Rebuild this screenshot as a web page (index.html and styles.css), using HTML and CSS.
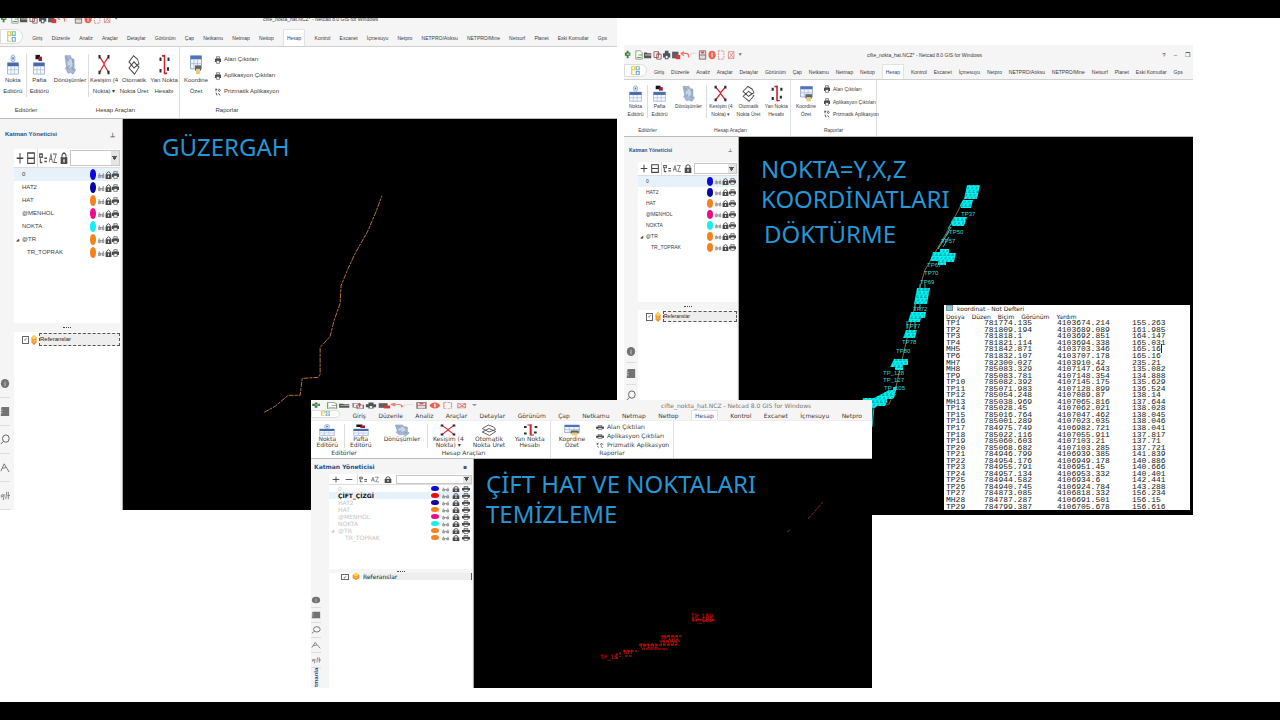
FILE: index.html
```html
<!DOCTYPE html>
<html lang="tr">
<head>
<meta charset="utf-8">
<title>Netcad güzergah</title>
<link rel="stylesheet" href="styles.css">
</head>
<body>
<svg class="defs" aria-hidden="true">
  <symbol id="quick" viewBox="0 0 130 12" preserveAspectRatio="none">
    <path d="M4 1v9M2 3v4M6 3v4" stroke="#267f63" stroke-width="2"/><path d="M3 5h3" stroke="#e8bd26" stroke-width="2"/>
    <path d="M13 1h5l2 2v8h-7z" fill="#fff" stroke="#7c9b7c"/><path d="M16 6h4M14 9h5" stroke="#4d9455" stroke-width="1"/>
    <path d="M22 3h3l1 1h4v6h-8z" fill="#555"/><path d="M23 6h8" stroke="#ddd"/>
    <path d="M33 2h5v7h-5zM36 5h5v6h-5z" fill="#eee" stroke="#8a6166"/><path d="M38 3v3" stroke="#d04444" stroke-width="2"/>
    <path d="M43 4h8v5h-8zM45 1h4v10h-4z" fill="#4b5556"/><path d="M46 7h2v3h-2z" fill="#fff"/>
    <path d="M53 2h7v8h-7z" fill="#645b60"/><path d="M57 6h5v5h-5z" fill="#d43b3b"/>
    <path d="M64 4h5q3 1 2 5M66 2l-3 2 3 3" fill="none" stroke="#e37b68" stroke-width="1.5"/>
    <path d="M80 4h-5q-3 1-2 5" fill="none" stroke="#ddd" stroke-width="1.5"/>
    <path d="M83 1h7v10h-7zM83 6h7" fill="#ddd" stroke="#915d60"/><path d="M85 3h3" stroke="#d43c3c" stroke-width="2"/>
    <ellipse cx="97" cy="6" rx="4" ry="5" fill="#e8664f"/><path d="M97 3v6" stroke="#fff"/>
    <path d="M104 1v10M110 1v10M104 1h6M104 11h6" stroke="#d8827d" stroke-dasharray="2 1"/>
    <path d="M115 2h6v8h-6zM116 3l5 7M121 2l-6 9" fill="none" stroke="#df8a85"/>
    <path d="M126 4h4l-2 3z" fill="#777"/>
  </symbol>
  <symbol id="logo" viewBox="0 0 12 16" preserveAspectRatio="none">
    <path d="M1 1h4v5H1zM1 6v8h4" fill="none" stroke="#dfc84a" stroke-width="1.5"/>
    <path d="M7 1h4v5H7z" fill="none" stroke="#73bfa3" stroke-width="1.5"/><path d="M7 9h4v5H7z" fill="none" stroke="#6ca6d9" stroke-width="1.5"/>
  </symbol>
  <symbol id="point" viewBox="0 0 24 24" preserveAspectRatio="none">
    <path d="M1 10h22v13H1z" fill="#f6f9ff" stroke="#8ba0cb"/><path d="M1 10h22v4H1z" fill="#466aac"/><path d="M1 18h22M8 14v9M15 14v9" stroke="#abb9dc"/>
    <circle cx="12" cy="5" r="4" fill="#dfeaf7" stroke="#7b9ac5"/><circle cx="12" cy="5" r="1.5" fill="#4a79b5"/>
  </symbol>
  <symbol id="sheet" viewBox="0 0 24 24" preserveAspectRatio="none">
    <path d="M1 10h22v13H1z" fill="#f6f9ff" stroke="#8ba0cb"/><path d="M1 10h22v4H1z" fill="#466aac"/><path d="M1 18h22M8 14v9M15 14v9" stroke="#abb9dc"/>
    <path d="M5 1h9v5H5z" fill="#161616"/><path d="M11 3h7v5h-7z" fill="#a3182b"/>
  </symbol>
  <symbol id="convert" viewBox="0 0 24 24" preserveAspectRatio="none">
    <path d="M2 2h11l2 4h5v10l3 2-5 5-5-2-5 1-3-4-2-1 2-3z" fill="#a9b9d2" stroke="#8297b8"/>
    <circle cx="12" cy="11" r="6" fill="#c9d5e7" stroke="#8fa3c2"/><path d="M4 4l6 4M15 15l5 4M7 17l4-4M17 5v5" stroke="#8fa3c2" stroke-width="2"/>
  </symbol>
  <symbol id="cross" viewBox="0 0 24 24" preserveAspectRatio="none">
    <path d="M3 3l9 8 9-8M3 21l9-9 9 9" fill="none" stroke="#e01e2c" stroke-width="2"/><path d="M1 1h4v4H1zM19 1h4v4h-4zM1 19h4v4H1zM19 19h4v4h-4z" fill="#242c2a"/>
  </symbol>
  <symbol id="auto" viewBox="0 0 24 24" preserveAspectRatio="none">
    <path d="M2 9L11 2l8 4 3 5-10 5zM2 16l10-7 10 6-9 8z" fill="none" stroke="#4c4c4c" stroke-width="1.5"/>
  </symbol>
  <symbol id="side" viewBox="0 0 24 24" preserveAspectRatio="none">
    <path d="M13 1v22" stroke="#d51e2c" stroke-width="3"/><path d="M8 2h6M13 22h5" stroke="#d51e2c" stroke-width="2"/><path d="M3 4h4v4H3zM19 4h4v4h-4zM3 17h4v4H3zM18 15h4v4h-4z" fill="#26352f"/>
  </symbol>
  <symbol id="summary" viewBox="0 0 24 24" preserveAspectRatio="none">
    <path d="M1 2h22v15H1z" fill="#edf2fb" stroke="#6d88ba"/><path d="M1 2h22v4H1z" fill="#4b74ba"/><path d="M8 6v11M15 6v11M1 11h22" stroke="#9eb0d4"/>
    <path d="M10 13h12v6H10z" fill="#5e6569"/><path d="M12 17h8v6h-8z" fill="#e5cd7d"/>
  </symbol>
  <symbol id="printer" viewBox="0 0 12 12" preserveAspectRatio="none">
    <path d="M3 1h6v3H3z" fill="#eee" stroke="#444"/><path d="M0 4h12v5H0z" fill="#4b4b4b"/><path d="M3 7h6v4H3z" fill="#fff" stroke="#444"/>
  </symbol>
  <symbol id="prism" viewBox="0 0 12 12" preserveAspectRatio="none">
    <path d="M1 2h3M2 1v4M6 2l3 4M8 1l3 3M2 7l2 4M7 8l3 3" stroke="#444" stroke-width="1.5"/>
  </symbol>
  <symbol id="lock" viewBox="0 0 12 12" preserveAspectRatio="none">
    <path d="M3 6V3q3-4 6 0v3" fill="none" stroke="#4b4b4b" stroke-width="1.5"/><path d="M1 5h10v7H1z" fill="#4b4b4b"/><path d="M5 7h2v3H5z" fill="#eee"/>
  </symbol>
  <symbol id="eyes" viewBox="0 0 12 12" preserveAspectRatio="none">
    <path d="M1 6h3v4H1zM7 6h3v4H7zM2 3v3M9 3v3M4 7h3" fill="#bbb" stroke="#777"/>
  </symbol>
  <symbol id="plus" viewBox="0 0 12 12" preserveAspectRatio="none"><path d="M6 1v10M1 6h10" stroke="#444" stroke-width="1.5"/></symbol>
  <symbol id="minusbox" viewBox="0 0 12 12" preserveAspectRatio="none"><path d="M1 1h10v10H1zM1 6h10" fill="none" stroke="#444" stroke-width="1.5"/></symbol>
  <symbol id="minus" viewBox="0 0 12 12" preserveAspectRatio="none"><path d="M1 6h10" stroke="#555" stroke-width="1.5"/></symbol>
  <symbol id="filter" viewBox="0 0 12 12" preserveAspectRatio="none"><path d="M1 2h4v3H1zM2 6v4h3M8 6h4M8 9h4" fill="none" stroke="#555" stroke-width="1.5"/></symbol>
  <symbol id="sort" viewBox="0 0 12 12" preserveAspectRatio="none"><path d="M0 10l3-8 2 8M1 7h4M6 2h5L7 10h5" fill="none" stroke="#555"/></symbol>
  <symbol id="ball" viewBox="0 0 12 12" preserveAspectRatio="none"><path d="M6 0l5 3v6l-5 3-5-3V3z" fill="#ef8d27"/><path d="M6 0l5 3-5 3-5-3z" fill="#ffd553"/><path d="M3 6h6v3H3z" fill="#f5b43d"/></symbol>
  <symbol id="info" viewBox="0 0 12 12" preserveAspectRatio="none"><ellipse cx="6" cy="6" rx="5" ry="5" fill="#737373"/><path d="M6 4v5" stroke="#ccc"/></symbol>
  <symbol id="folder" viewBox="0 0 12 12" preserveAspectRatio="none"><path d="M2 1h9v10H1V8h2V7H1V5h2V4H1z" fill="#737373"/></symbol>
  <symbol id="search" viewBox="0 0 12 12" preserveAspectRatio="none"><ellipse cx="7" cy="5" rx="4" ry="4" fill="none" stroke="#555"/><path d="M4 8l-3 3" stroke="#555"/></symbol>
  <symbol id="measure" viewBox="0 0 12 12" preserveAspectRatio="none"><path d="M1 10l4-8 6 9M3 7l4-1" fill="none" stroke="#666"/></symbol>
  <symbol id="script" viewBox="0 0 12 12" preserveAspectRatio="none"><path d="M4 5q-4 0-2 3l3-3-1 6M7 10l1-8M9 6h3M10 2v8" fill="none" stroke="#777"/></symbol>
  <pattern id="dense" width="4" height="7" patternUnits="userSpaceOnUse" patternTransform="skewX(-15)">
    <rect width="4" height="7" fill="#00f5f5"/><path d="M3 1v2M1 4v2M0 7h3" stroke="#056a70" stroke-width="1"/>
  </pattern>
</svg>

<div class="band"></div>
<main class="stage">

  <section class="window window-route">
    <header class="title"><svg class="quick"><use href="#quick"/></svg><span class="caption">cifte_nokta_hat.NCZ* - Netcad 8.0 GIS for Windows</span></header>
    <nav class="tabs">
      <button class="start" aria-label="Netcad"><svg><use href="#logo"/></svg></button>
      <button>Giriş</button><button>Düzenle</button><button>Analiz</button><button>Araçlar</button><button>Detaylar</button><button>Görünüm</button><button>Çap</button><button>Netkamu</button><button>Netmap</button><button>Nettop</button><button class="active">Hesap</button><button>Kontrol</button><button>Excanet</button><button>İçmesuyu</button><button>Netpro</button><button>NETPRO/Atıksu</button><button>NETPRO/Mine</button><button>Netsurf</button><button>Planet</button><button>Eski Komutlar</button><button>Gps</button>
    </nav>
    <div class="ribbon">
      <div class="group editors"><div class="tools"><button class="tool"><svg><use href="#point"/></svg>Nokta<br>Editörü</button><button class="tool ruled"><svg><use href="#sheet"/></svg>Pafta<br>Editörü</button></div><span>Editörler</span></div>
      <div class="group calc"><div class="tools"><button class="tool wide"><svg><use href="#convert"/></svg>Dönüşümler</button><button class="tool ruled"><svg><use href="#cross"/></svg>Kesişim (4<br>Nokta) ▾</button><button class="tool"><svg><use href="#auto"/></svg>Otomatik<br>Nokta Üret</button><button class="tool"><svg><use href="#side"/></svg>Yan Nokta<br>Hesabı</button></div><span>Hesap Araçları</span></div>
      <div class="group reports"><div class="tools"><button class="tool wide"><svg><use href="#summary"/></svg>Koordine<br>Özet</button><div class="links"><button><svg><use href="#printer"/></svg>Alan Çıktıları</button><button><svg><use href="#printer"/></svg>Aplikasyon Çıktıları</button><button><svg><use href="#prism"/></svg>Prizmatik Aplikasyon</button></div></div><span>Raporlar</span></div>
    </div>
    <div class="work">
      <aside class="dock"><svg><use href="#info"/></svg><svg><use href="#folder"/></svg><svg><use href="#search"/></svg><svg><use href="#measure"/></svg><svg><use href="#script"/></svg></aside>
      <div class="panel">
        <h2>Katman Yöneticisi<i>⊥</i></h2>
        <div class="bar"><button aria-label="Ekle"><svg><use href="#plus"/></svg></button><button aria-label="Sil"><svg><use href="#minusbox"/></svg></button><button class="ruled" aria-label="Süz"><svg><use href="#filter"/></svg></button><button aria-label="Sırala"><svg><use href="#sort"/></svg></button><button aria-label="Kilit"><svg><use href="#lock"/></svg></button><select aria-label="Filtre"><option></option></select></div>
        <ul class="layers">
          <li class="picked"><span>0</span><b class="blue"></b><svg><use href="#eyes"/></svg><svg><use href="#lock"/></svg><svg><use href="#printer"/></svg></li>
          <li><span>HAT2</span><b class="navy"></b><svg><use href="#eyes"/></svg><svg><use href="#lock"/></svg><svg><use href="#printer"/></svg></li>
          <li><span>HAT</span><b></b><svg><use href="#eyes"/></svg><svg><use href="#lock"/></svg><svg><use href="#printer"/></svg></li>
          <li><span>@MENHOL</span><b class="pink"></b><svg><use href="#eyes"/></svg><svg><use href="#lock"/></svg><svg><use href="#printer"/></svg></li>
          <li><span>NOKTA</span><b class="cyan"></b><svg><use href="#eyes"/></svg><svg><use href="#lock"/></svg><svg><use href="#printer"/></svg></li>
          <li class="parent"><span>@TR</span><b></b><svg><use href="#eyes"/></svg><svg><use href="#lock"/></svg><svg><use href="#printer"/></svg></li>
          <li class="child"><span>TR_TOPRAK</span><b></b><svg><use href="#eyes"/></svg><svg><use href="#lock"/></svg><svg><use href="#printer"/></svg></li>
        </ul>
        <div class="split"></div>
        <label class="refs"><input type="checkbox" checked><svg><use href="#ball"/></svg><span>Referanslar</span></label>
      </div>
      <div class="canvas">
        <svg class="drawing" viewBox="0 0 494 392">
          <path d="M141 294L152 288 165 277 177 277 179 260 195 259 197 256 197 229 207 218 211 202 217 185 218 167 225 150 232 135 245 112 253 93 259 77" fill="none" stroke="#b5743b" stroke-dasharray="5 1 3 1"/>
        </svg>
        <p class="note">GÜZERGAH</p>
      </div>
    </div>
  </section>

  <section class="window window-points">
    <header class="title"><svg class="quick"><use href="#quick"/></svg><span class="caption">cifte_nokta_hat.NCZ* - Netcad 8.0 GIS for Windows</span><span class="controls"><button>?</button><button>–</button><button>❐</button></span></header>
    <nav class="tabs">
      <button class="start" aria-label="Netcad"><svg><use href="#logo"/></svg></button>
      <button>Giriş</button><button>Düzenle</button><button>Analiz</button><button>Araçlar</button><button>Detaylar</button><button>Görünüm</button><button>Çap</button><button>Netkamu</button><button>Netmap</button><button>Nettop</button><button class="active">Hesap</button><button>Kontrol</button><button>Excanet</button><button>İçmesuyu</button><button>Netpro</button><button>NETPRO/Atıksu</button><button>NETPRO/Mine</button><button>Netsurf</button><button>Planet</button><button>Eski Komutlar</button><button>Gps</button>
    </nav>
    <div class="ribbon">
      <div class="group editors"><div class="tools"><button class="tool"><svg><use href="#point"/></svg>Nokta<br>Editörü</button><button class="tool ruled"><svg><use href="#sheet"/></svg>Pafta<br>Editörü</button></div><span>Editörler</span></div>
      <div class="group calc"><div class="tools"><button class="tool wide"><svg><use href="#convert"/></svg>Dönüşümler</button><button class="tool ruled"><svg><use href="#cross"/></svg>Kesişim (4<br>Nokta) ▾</button><button class="tool"><svg><use href="#auto"/></svg>Otomatik<br>Nokta Üret</button><button class="tool"><svg><use href="#side"/></svg>Yan Nokta<br>Hesabı</button></div><span>Hesap Araçları</span></div>
      <div class="group reports"><div class="tools"><button class="tool wide"><svg><use href="#summary"/></svg>Koordine<br>Özet</button><div class="links"><button><svg><use href="#printer"/></svg>Alan Çıktıları</button><button><svg><use href="#printer"/></svg>Aplikasyon Çıktıları</button><button><svg><use href="#prism"/></svg>Prizmatik Aplikasyon</button></div></div><span>Raporlar</span></div>
    </div>
    <div class="work">
      <aside class="dock"><svg><use href="#info"/></svg><svg><use href="#folder"/></svg><svg><use href="#search"/></svg><svg><use href="#measure"/></svg><svg><use href="#script"/></svg></aside>
      <div class="panel">
        <h2>Katman Yöneticisi<i>⊥</i></h2>
        <div class="bar"><button aria-label="Ekle"><svg><use href="#plus"/></svg></button><button aria-label="Sil"><svg><use href="#minusbox"/></svg></button><button class="ruled" aria-label="Süz"><svg><use href="#filter"/></svg></button><button aria-label="Sırala"><svg><use href="#sort"/></svg></button><button aria-label="Kilit"><svg><use href="#lock"/></svg></button><select aria-label="Filtre"><option></option></select></div>
        <ul class="layers">
          <li class="picked"><span>0</span><b class="blue"></b><svg><use href="#eyes"/></svg><svg><use href="#lock"/></svg><svg><use href="#printer"/></svg></li>
          <li><span>HAT2</span><b class="navy"></b><svg><use href="#eyes"/></svg><svg><use href="#lock"/></svg><svg><use href="#printer"/></svg></li>
          <li><span>HAT</span><b></b><svg><use href="#eyes"/></svg><svg><use href="#lock"/></svg><svg><use href="#printer"/></svg></li>
          <li><span>@MENHOL</span><b class="pink"></b><svg><use href="#eyes"/></svg><svg><use href="#lock"/></svg><svg><use href="#printer"/></svg></li>
          <li><span>NOKTA</span><b class="cyan"></b><svg><use href="#eyes"/></svg><svg><use href="#lock"/></svg><svg><use href="#printer"/></svg></li>
          <li class="parent"><span>@TR</span><b></b><svg><use href="#eyes"/></svg><svg><use href="#lock"/></svg><svg><use href="#printer"/></svg></li>
          <li class="child"><span>TR_TOPRAK</span><b></b><svg><use href="#eyes"/></svg><svg><use href="#lock"/></svg><svg><use href="#printer"/></svg></li>
        </ul>
        <div class="split"></div>
        <label class="refs"><input type="checkbox" checked><svg><use href="#ball"/></svg><span>Referanslar</span></label>
      </div>
      <div class="canvas">
        <svg class="drawing" viewBox="0 0 454 378">
          <path d="M128 268l22-1 6-13 10-44 12-50 8-27 22-38 24-46" fill="none" stroke="#9a6334"/>
          <g fill="url(#dense)">
            <path d="M228 48h13l-1 5-2 9h-13l2-9zM224 63h10l-2 8h-10l-1-3zM215 80h13l-3 9h-12l-1-4zM194 115h7v-3h9v4h7l-2 9h-8v3h-8v-4h-8zM178 151h13l-3 16h-13zM172 175h15l-1 6h-4l-1 4h-12zM167 193h11l-2 8h-12zM155 222h14v6h-5v5h-8v-3h-5zM150 253h4v-3h4l-2 7h1l-3 5h-6v4h-22l1-5h8zM124 261h17v3h7l-2 5h-8l-2 2h-14z"/>
          </g>
          <g class="ticks"><path d="M209 92l5-9M207 99l5-9M202 106l8-11M199 112l7-11M204 110l6-10M181 147v8M186 147v8M176 166v8M181 166v8M168 184v8M176 184v8M133 271v14M130 272l2 14M135 270l-2 20"/></g>
          <g class="cad">
            <text x="222" y="79">TP37</text><text x="210" y="97">TP50</text><text x="202" y="106">TP57</text><text x="188" y="130">TP67</text><text x="185" y="138">TP70</text><text x="181" y="147">TP69</text><text x="174" y="174">TP72</text><text x="167" y="191">TP77</text><text x="163" y="207">TP78</text><text x="157" y="216">TP80</text><text x="144" y="238">TP_128</text><text x="144" y="245">TP_127</text><text x="145" y="253">TP_105</text>
          </g>
        </svg>
        <p class="note">NOKTA=Y,X,Z<br>KOORDİNATLARI</p>
        <p class="note second">DÖKTÜRME</p>
      </div>
    </div>
  </section>

  <section class="notepad">
    <header><i></i>koordinat - Not Defteri</header>
    <nav><button>Dosya</button><button>Düzen</button><button>Biçim</button><button>Görünüm</button><button>Yardım</button></nav>
    <table>
      <tr><td>TP1</td><td>781774.135</td><td>4103674.214</td><td>155.263</td></tr>
      <tr><td>TP2</td><td>781809.194</td><td>4103689.089</td><td>161.985</td></tr>
      <tr><td>TP3</td><td>781818.1</td><td>4103692.851</td><td>164.147</td></tr>
      <tr><td>TP4</td><td>781821.114</td><td>4103694.338</td><td>165.031</td></tr>
      <tr><td>MH5</td><td>781842.871</td><td>4103703.346</td><td class="caret">165.16</td></tr>
      <tr><td>TP6</td><td>781832.107</td><td>4103707.178</td><td>165.16</td></tr>
      <tr><td>MH7</td><td>782300.027</td><td>4103910.42</td><td>235.21</td></tr>
      <tr><td>MH8</td><td>785083.329</td><td>4107147.643</td><td>135.082</td></tr>
      <tr><td>TP9</td><td>785083.781</td><td>4107148.354</td><td>134.888</td></tr>
      <tr><td>TP10</td><td>785082.392</td><td>4107145.175</td><td>135.629</td></tr>
      <tr><td>TP11</td><td>785071.983</td><td>4107128.899</td><td>136.524</td></tr>
      <tr><td>TP12</td><td>785054.248</td><td>4107089.87</td><td>138.14</td></tr>
      <tr><td>MH13</td><td>785038.969</td><td>4107065.816</td><td>137.644</td></tr>
      <tr><td>TP14</td><td>785028.45</td><td>4107062.021</td><td>138.028</td></tr>
      <tr><td>TP15</td><td>785016.764</td><td>4107047.462</td><td>138.045</td></tr>
      <tr><td>TP16</td><td>785001.289</td><td>4107023.035</td><td>138.046</td></tr>
      <tr><td>TP17</td><td>784975.749</td><td>4106982.721</td><td>138.041</td></tr>
      <tr><td>TP18</td><td>785022.116</td><td>4107055.911</td><td>137.817</td></tr>
      <tr><td>TP19</td><td>785060.603</td><td>4107103.21</td><td>137.71</td></tr>
      <tr><td>TP20</td><td>785068.682</td><td>4107103.285</td><td>137.721</td></tr>
      <tr><td>TP21</td><td>784946.799</td><td>4106939.385</td><td>141.839</td></tr>
      <tr><td>TP22</td><td>784954.176</td><td>4106949.178</td><td>140.886</td></tr>
      <tr><td>TP23</td><td>784955.791</td><td>4106951.45</td><td>140.666</td></tr>
      <tr><td>TP24</td><td>784957.134</td><td>4106953.332</td><td>140.401</td></tr>
      <tr><td>TP25</td><td>784944.582</td><td>4106934.6</td><td>142.441</td></tr>
      <tr><td>TP26</td><td>784940.745</td><td>4106924.784</td><td>143.288</td></tr>
      <tr><td>TP27</td><td>784873.085</td><td>4106818.332</td><td>156.234</td></tr>
      <tr><td>MH28</td><td>784787.287</td><td>4106691.501</td><td>156.15</td></tr>
      <tr><td>TP29</td><td>784799.387</td><td>4106705.678</td><td>156.616</td></tr>
    </table>
  </section>

  <section class="window window-clean">
    <header class="title"><svg class="quick"><use href="#quick"/></svg><span class="caption">cifte_nokta_hat.NCZ - Netcad 8.0 GIS for Windows</span></header>
    <nav class="tabs">
      <button class="start" aria-label="Netcad"><svg><use href="#logo"/></svg></button>
      <button>Giriş</button><button>Düzenle</button><button>Analiz</button><button>Araçlar</button><button>Detaylar</button><button>Görünüm</button><button>Çap</button><button>Netkamu</button><button>Netmap</button><button>Nettop</button><button class="active">Hesap</button><button>Kontrol</button><button>Excanet</button><button>İçmesuyu</button><button>Netpro</button>
    </nav>
    <div class="ribbon">
      <div class="group editors"><div class="tools"><button class="tool"><svg><use href="#point"/></svg>Nokta<br>Editörü</button><button class="tool ruled"><svg><use href="#sheet"/></svg>Pafta<br>Editörü</button></div><span>Editörler</span></div>
      <div class="group calc"><div class="tools"><button class="tool wide"><svg><use href="#convert"/></svg>Dönüşümler</button><button class="tool ruled"><svg><use href="#cross"/></svg>Kesişim (4<br>Nokta) ▾</button><button class="tool"><svg><use href="#auto"/></svg>Otomatik<br>Nokta Üret</button><button class="tool"><svg><use href="#side"/></svg>Yan Nokta<br>Hesabı</button></div><span>Hesap Araçları</span></div>
      <div class="group reports"><div class="tools"><button class="tool wide"><svg><use href="#summary"/></svg>Koordine<br>Özet</button><div class="links"><button><svg><use href="#printer"/></svg>Alan Çıktıları</button><button><svg><use href="#printer"/></svg>Aplikasyon Çıktıları</button><button><svg><use href="#prism"/></svg>Prizmatik Aplikasyon</button></div></div><span>Raporlar</span></div>
    </div>
    <div class="work">
      <aside class="dock"><svg><use href="#info"/></svg><svg><use href="#folder"/></svg><svg><use href="#search"/></svg><svg><use href="#measure"/></svg><svg><use href="#script"/></svg><span class="docktab">tmanla</span></aside>
      <div class="panel">
        <h2>Katman Yöneticisi<i>▪</i></h2>
        <div class="bar"><button aria-label="Ekle"><svg><use href="#plus"/></svg></button><button aria-label="Sil"><svg><use href="#minus"/></svg></button><button class="ruled" aria-label="Süz"><svg><use href="#filter"/></svg></button><button aria-label="Sırala"><svg><use href="#sort"/></svg></button><button aria-label="Kilit"><svg><use href="#lock"/></svg></button><select aria-label="Filtre"><option></option></select></div>
        <ul class="layers">
          <li><span>0</span><b class="blue"></b><svg><use href="#eyes"/></svg><svg><use href="#lock"/></svg><svg><use href="#printer"/></svg></li>
          <li class="picked"><span>ÇİFT_ÇİZGİ</span><b class="red"></b><svg><use href="#eyes"/></svg><svg><use href="#lock"/></svg><svg><use href="#printer"/></svg></li>
          <li><span>HAT2</span><b class="navy"></b><svg><use href="#eyes"/></svg><svg><use href="#lock"/></svg><svg><use href="#printer"/></svg></li>
          <li><span>HAT</span><b></b><svg><use href="#eyes"/></svg><svg><use href="#lock"/></svg><svg><use href="#printer"/></svg></li>
          <li><span>@MENHOL</span><b class="pink"></b><svg><use href="#eyes"/></svg><svg><use href="#lock"/></svg><svg><use href="#printer"/></svg></li>
          <li><span>NOKTA</span><b class="cyan"></b><svg><use href="#eyes"/></svg><svg><use href="#lock"/></svg><svg><use href="#printer"/></svg></li>
          <li class="parent"><span>@TR</span><b></b><svg><use href="#eyes"/></svg><svg><use href="#lock"/></svg><svg><use href="#printer"/></svg></li>
          <li class="child"><span>TR_TOPRAK</span><b></b><svg><use href="#eyes"/></svg><svg><use href="#lock"/></svg><svg><use href="#printer"/></svg></li>
        </ul>
        <div class="split"></div>
        <label class="refs"><input type="checkbox" checked><svg><use href="#ball"/></svg><span>Referanslar</span></label>
      </div>
      <div class="canvas">
        <svg class="drawing" viewBox="0 0 398 229">
          <path d="M334 60l15-17M313 73l4-3" stroke="#8a2626" stroke-dasharray="4 1"/>
          <g class="cad red">
            <text x="217" y="159">TP_189</text><text x="217" y="163">TP_189</text>
            <text x="186" y="181">TP101</text><text x="185" y="186">TP105</text><text x="165" y="189">TP102</text><text x="149" y="195">NH</text><text x="126" y="200">TP_16</text>
            <path d="M165 186h38M168 190h25M189 177h19M188 182h18M149 192h14M151 197h8M143 194v6M146 193v5M218 161h24" stroke="#e01010" stroke-dasharray="3 1"/>
          </g>
        </svg>
        <p class="note">ÇİFT HAT VE NOKTALARI<br>TEMİZLEME</p>
      </div>
    </div>
  </section>
</main>
<div class="band"></div>
</body>
</html>
```
FILE: styles.css
```css
* { box-sizing: border-box; }
body {
  margin: 0;
  min-height: 100vh;
  display: flex;
  flex-direction: column;
  background: #fff;
  font-family: "Liberation Sans", sans-serif;
  color: #3c3c3c;
}
.defs { position: absolute; width: 0; height: 0; }
.band { height: 18px; background: #000; }
.stage { position: relative; flex: 1; min-height: 684px; }
button {
  margin: 0;
  padding: 0;
  border: 0;
  background: none;
  font: inherit;
  color: inherit;
  white-space: nowrap;
}

/* Windows laid out freely on the slide */
.window {
  position: absolute;
  display: flex;
  flex-direction: column;
  overflow: hidden;
  background: #fff;
  font-size: 6px;
}
.window-route {
  left: 0; top: 0; width: 617px; height: 492px;
  --title: 21px; --tabs: 18px; --ribbon: 72px; --line: 11px;
  --icon-w: 12px; --icon-h: 21px; --pad: 7px;
  --g1: 52px; --g2: 128px; --g3: 94px; --b2: 36px; --b3: 32px;
  --dock: 14px; --dock-item: 28px; --panel: 106px; --edge: 3px;
  --head: 30px; --bar: 19px; --row: 13px; --list: 155px; --split: 9px; --mark: 8px;
}
.window-route .title { margin-top: -10px; }
.window-points {
  left: 624px; top: 27px; width: 569px; height: 470px;
  --title: 19px; --tabs: 16px; --ribbon: 57px; --line: 8px;
  --icon-w: 13px; --icon-h: 17px; --pad: 5px;
  --g1: 47px; --g2: 120px; --g3: 86px; --b2: 35px; --b3: 30px;
  --dock: 14px; --dock-item: 22px; --panel: 99px; --edge: 2px;
  --head: 25px; --bar: 14px; --row: 11px; --list: 126px; --split: 8px; --mark: 7px;
}
.window-clean {
  left: 311px; top: 382px; width: 561px; height: 288px;
  font-family: "DejaVu Sans", sans-serif;
  --title: 10px; --tabs: 11px; --ribbon: 38px; --line: 6px;
  --icon-w: 16px; --icon-h: 12px; --pad: 3px;
  --g1: 66px; --g2: 174px; --g3: 123px; --b2: 50px; --b3: 42px;
  --dock: 18px; --dock-item: 15px; --panel: 143px; --edge: 2px;
  --head: 15px; --bar: 11px; --row: 7px; --list: 84px; --split: 4px; --mark: 4px;
}
.window-points,
.window-route .title,
.window-route .tabs { font-size: 5px; }

.title {
  flex: none;
  height: var(--title);
  display: flex;
  align-items: center;
  background: #f5f5f5;
}
.quick { width: 118px; height: 10px; }
.window-clean .quick { width: 166px; height: 7px; }
.caption { margin-left: 125px; white-space: nowrap; }
.window-route .caption { margin-left: 145px; }
.window-clean .caption { margin-left: 184px; color: #777; }
.controls { margin-left: auto; display: flex; gap: 8px; padding-right: 3px; font-size: 6px; }

.tabs {
  flex: none;
  height: var(--tabs);
  display: flex;
  justify-content: space-between;
  padding-right: 10px;
  background: #f5f5f5;
  border-bottom: 1px solid #d0d0d0;
}
.window-clean .tabs { border-bottom-color: #eee; }
.tabs .start {
  width: 23px;
  margin-bottom: 2px;
  display: flex;
  align-items: center;
  justify-content: center;
  background: #fff;
  border: 1px solid #ddd;
  border-radius: 0 8px 8px 0;
}
.window-clean .start { width: 29px; }
.start svg { width: 9px; height: 90%; }
.tabs .active { background: #fff; padding: 0 3px; color: #1e4b8c; border: 1px solid #e2e2e2; border-bottom: 0; }

.ribbon { flex: none; height: var(--ribbon); display: flex; border-bottom: 1px solid #bbb; }
.group { display: flex; flex-direction: column; align-items: center; line-height: var(--line); padding-top: var(--pad); }
.group > span { margin-top: auto; padding-bottom: 2px; }
.editors { width: var(--g1); }
.calc { width: var(--g2); border-right: 1px solid #e0e0e0; }
.reports { width: var(--g3); border-right: 1px solid #e0e0e0; }
.window-route .reports { border-right: 0; }
.tools { display: flex; align-self: stretch; }
.tool { flex: 1 1 0; display: flex; flex-direction: column; align-items: center; line-height: var(--line); min-width: 0; text-align: center; }
.tool svg { width: var(--icon-w); height: var(--icon-h); flex: none; }
.ruled { border-left: 1px solid #ddd; }
.calc .wide { flex: none; width: var(--b2); }
.reports .wide { flex: none; width: var(--b3); }
.links { display: flex; flex-direction: column; justify-content: space-between; padding-left: 3px; }
.links button { display: flex; align-items: center; gap: 3px; }
.links svg { width: 6px; height: 8px; }
.window-clean .links svg { width: 8px; height: 5px; }

.work { flex: 1; display: flex; min-height: 0; background: #f5f5f5; }
.dock {
  flex: none;
  width: var(--dock);
  display: flex;
  flex-direction: column;
  justify-content: flex-end;
}
.window-points .dock { padding-bottom: 64px; }
.dock svg { width: 10px; height: var(--dock-item); padding: 8px 0; border-bottom: 1px solid #ddd; flex: none; }
.window-points .dock svg { padding: 5px 0; margin-left: 2px; }
.window-clean .dock svg { padding: 3px 0; }
.docktab { writing-mode: vertical-rl; rotate: 180deg; font-family: "Liberation Sans", sans-serif; font-weight: bold; line-height: 10px; color: #22508f; height: 20px; align-self: flex-start; text-align: right; }

.panel {
  flex: none;
  width: var(--panel);
  display: flex;
  flex-direction: column;
  background: #fff;
}
.panel h2 {
  margin: 0 0 0 calc(0px - var(--dock));
  padding: 0 5px;
  height: var(--head);
  display: flex;
  align-items: center;
  justify-content: space-between;
  font-size: inherit;
  color: #24538f;
  background: #f5f5f5;
}
.window-clean .panel h2 { padding-left: 3px; }
.panel h2 i { font-style: normal; color: #555; }
.bar { flex: none; height: var(--bar); display: flex; align-items: center; gap: 1px; padding-left: 1px; border-bottom: 1px solid #ddd; }
.bar button { width: 10px; height: 100%; display: grid; place-items: center; }
.bar svg { width: 8px; height: 70%; }
.window-clean .bar { padding-left: 2px; gap: 3px; }
.bar select {
  flex: 1;
  min-width: 0;
  height: 90%;
  margin: 0;
  padding: 0;
  appearance: none;
  border: 1px solid #c8c8c8;
  border-radius: 0;
  background:
    conic-gradient(from -35deg at 50% 100%, #555 70deg, transparent 0) right 2px center / 5px 4px no-repeat,
    linear-gradient(#e4e4e4, #e4e4e4) right / 8px 100% no-repeat,
    #fff;
}
.layers { flex: none; height: var(--list); margin: 0; padding: 0; list-style: none; }
.layers li { height: var(--row); display: flex; align-items: center; padding: 0 0 0 8px; position: relative; line-height: var(--row); }
.layers span { flex: 1; }
.layers .picked { background: #e6f1fa; }
.layers .child { padding-left: 13px; }
.layers .parent::before { content: "◢"; position: absolute; left: 2px; font-size: 4px; }
.layers b { width: 6px; height: 80%; border-radius: 50%; background: #f5821e; margin-right: 2px; }
.layers .blue { background: #0808df; }
.layers .navy { background: #0606a6; }
.layers .pink { background: #ed0b87; }
.layers .cyan { background: #15eff2; }
.layers .red { background: #e80c0c; }
.layers svg { width: 7px; height: var(--mark); }
.window-route .layers li,
.window-points .layers li { padding-right: 1px; }
.window-clean .layers b { width: 8px; margin-right: 3px; }
.window-clean .layers svg { width: 8px; height: 6px; margin-right: 2px; }
.window-clean .layers li { color: #c4c4c4; padding-left: 9px; }
.window-clean .layers .child { padding-left: 16px; }
.window-clean .layers .picked { color: #111; font-weight: bold; }
.split { flex: none; height: var(--split); background: #f5f5f5; display: grid; place-items: center; }
.split::before { content: ""; width: 8px; border-top: 1px dotted #444; }
.refs { display: flex; align-items: center; gap: 2px; padding-left: 8px; line-height: var(--row); margin-top: 1px; color: #222; }
.refs input { appearance: none; margin: 0; width: 7px; height: 8px; border: 1px solid #666; background: #fff; display: grid; place-items: center; }
.refs input::before { content: "✓"; font: 5px/5px "DejaVu Sans", sans-serif; color: #333; }
.refs svg { width: 6px; height: 10px; }
.refs span { flex: 1; background: #eee; border: 1px dashed #555; line-height: calc(var(--row) - 2px); }
.window-clean .refs { padding-left: 12px; gap: 3px; margin-top: 0; }
.window-clean .refs input { width: 8px; height: 6px; }
.window-clean .refs svg { width: 8px; height: 7px; }
.window-clean .refs span { border: 0; line-height: 7px; border-right: 1px solid #555; }

.canvas { position: relative; flex: 1; min-width: 0; background: #000; border-left: 1px solid #aaa; margin-left: calc(var(--edge) - 1px); }
.drawing { position: absolute; left: 0; top: 0; width: 100%; height: 100%; }
.note {
  position: relative;
  margin: 0;
  padding: 13px 0 0 39px;
  font: 24px/30px "Noto Sans", "Open Sans", sans-serif;
  color: #2696d4;
  white-space: nowrap;
}
.window-points .note { padding: 17px 0 0 22px; }
.window-points .second { padding: 5px 0 0 25px; }
.window-clean .note { padding: 10px 0 0 12px; }
.cad { font-size: 6px; fill: #33d6d0; }
.cad.red { fill: #e01010; }
.ticks { stroke: #19bebe; stroke-width: 1; }

.notepad {
  position: absolute;
  left: 944px;
  top: 287px;
  width: 246px;
  height: 205px;
  padding: 0 2px;
  background: #fff;
  color: #222;
  font: 6px/8px "DejaVu Sans", sans-serif;
  display: flex;
  flex-direction: column;
}
.notepad header { display: flex; gap: 4px; }
.notepad header i { width: 7px; height: 6px; background: #8fc1cf; border: 1px solid #6f98a3; }
.notepad nav { display: flex; gap: 7px; line-height: 7px; }
.notepad table {
  flex: 1;
  width: 100%;
  border-collapse: collapse;
  table-layout: fixed;
  font: 8px/6px "Liberation Mono", monospace;
}
.notepad td { padding: 0; }
.notepad td:nth-child(1) { width: 38px; }
.notepad td:nth-child(2) { width: 73px; }
.notepad td:nth-child(3) { width: 75px; }
.notepad .caret::after { content: ""; border-right: 1px solid #222; }
```
